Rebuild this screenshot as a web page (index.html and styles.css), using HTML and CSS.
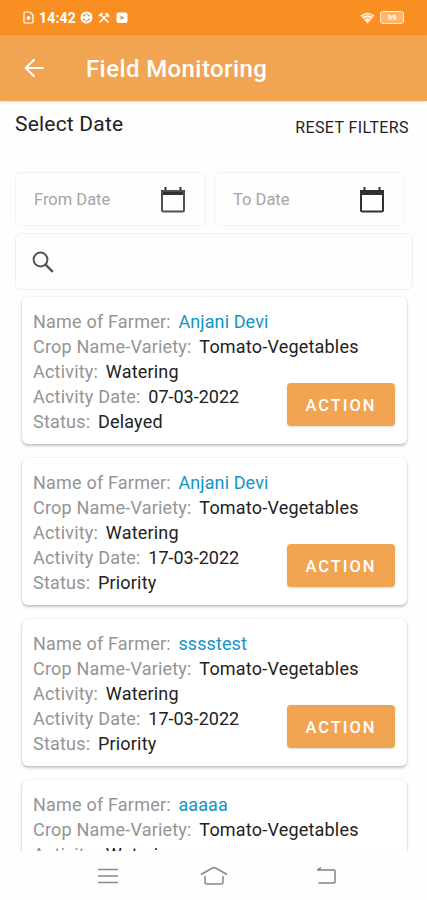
FILE: index.html
```
<!DOCTYPE html>
<html lang="en">
<head>
    <meta charset="UTF-8" />
    <meta name="viewport" content="width=device-width, initial-scale=1.0">
    <title>Field Monitoring</title>
    <link rel="stylesheet" href="styles.css">
</head>
<body>
<div class="status-bar">
    <svg class="sim" width="11" height="13" viewBox="0 0 11 13" fill="none" stroke="#fff" stroke-width="1.200">
        <path d="M2 1h5l3 3v7q0 1-1 1H2q-1 0-1-1V2q0-1 1-1z"/>
        <path d="M5.500 5v4M3.500 7h4" stroke-width="1.700"/>
    </svg>
    <span class="time">14:42</span>
    <svg class="globe" width="13" height="13" viewBox="0 0 13 13">
        <circle cx="6.500" cy="6.500" r="6" fill="#fff"/>
        <path d="M3 4.500h2.500M7.500 4.500H10M3 8.500h2.500M7.500 8.500H10M6.500 2v1.500M6.500 9.500v1.500" stroke="#f98f22" stroke-width="1.600"/>
    </svg>
    <svg class="tools" width="12" height="12" viewBox="0 0 12 12" fill="none" stroke="#fff" stroke-width="1.500">
        <path d="M3 3l7.500 7.500M1.500 10.500L9 3"/>
        <path d="M1 4l3.500-3M7.500 1.500Q10.500 2 10.500 5" stroke-width="1.900"/>
    </svg>
    <svg class="video" width="12" height="12" viewBox="0 0 12 12">
        <rect x="0.500" y="0.500" width="11" height="10.500" rx="2" fill="#fff"/>
        <path d="M4.500 3.500v4.500l4-2.250z" fill="#f98f22"/>
    </svg>
    <svg class="wifi" width="15" height="12" viewBox="0 0 15 12">
        <path d="M0.500 3.500Q7.500-2 14.500 3.500L7.500 11.500z" fill="#fff" opacity="0.900"/>
        <path d="M2 4.500Q7.500 1 13 4.500M4 7Q7.500 4.500 11 7" fill="none" stroke="#f98f22" stroke-width="0.800"/>
    </svg>
    <span class="battery">99</span>
</div>
<header>
    <svg width="20" height="20" viewBox="0 0 20 20" fill="none" stroke="#fff" stroke-width="2">
        <path d="M19.500 10H2M10.500 1.200L1.700 10l8.800 8.800"/>
    </svg>
    <h1>Field Monitoring</h1>
</header>

<main>
    <div class="filter-head">
        <span class="select-date">Select Date</span>
        <span class="reset">RESET FILTERS</span>
    </div>
    <div class="dates">
        <div class="date-field from">
            <span>From Date</span>
            <svg width="26" height="28" viewBox="0 0 26 28">
                <path d="M1 4h24v5H1zM4.500 1h2v4h-2zM19.500 1h2v4h-2z" fill="#303137"/>
                <rect x="2" y="5" width="22" height="20.500" rx="1.500" fill="none" stroke="#505156" stroke-width="2"/>
            </svg>
        </div>
        <div class="date-field to">
            <span>To Date</span>
            <svg width="26" height="28" viewBox="0 0 26 28">
                <path d="M1 4h24v5H1zM4.500 1h2v4h-2zM19.500 1h2v4h-2z" fill="#303137"/>
                <rect x="2" y="5" width="22" height="20.500" rx="1.500" fill="none" stroke="#303137" stroke-width="2"/>
            </svg>
        </div>
    </div>
    <div class="search">
        <svg width="22" height="22" viewBox="0 0 22 22" fill="none" stroke="#555" stroke-width="2">
            <circle cx="8.500" cy="8.500" r="6.900"/>
            <path d="M13.300 13.300L20.800 20.800" stroke-width="2.400"/>
        </svg>
    </div>

    <div class="list">
        <div class="card">
            <p>Name of Farmer: <a class="value">Anjani Devi</a></p>
            <p>Crop Name-Variety: <span class="value">Tomato-Vegetables</span></p>
            <p>Activity: <span class="value">Watering</span></p>
            <p>Activity Date: <span class="value date">07-03-2022</span></p>
            <p>Status: <span class="value">Delayed</span></p>
            <button>ACTION</button>
        </div>
        <div class="card">
            <p>Name of Farmer: <a class="value">Anjani Devi</a></p>
            <p>Crop Name-Variety: <span class="value">Tomato-Vegetables</span></p>
            <p>Activity: <span class="value">Watering</span></p>
            <p>Activity Date: <span class="value date">17-03-2022</span></p>
            <p>Status: <span class="value">Priority</span></p>
            <button>ACTION</button>
        </div>
        <div class="card">
            <p>Name of Farmer: <a class="value">sssstest</a></p>
            <p>Crop Name-Variety: <span class="value">Tomato-Vegetables</span></p>
            <p>Activity: <span class="value">Watering</span></p>
            <p>Activity Date: <span class="value date">17-03-2022</span></p>
            <p>Status: <span class="value">Priority</span></p>
            <button>ACTION</button>
        </div>
        <div class="card">
            <p>Name of Farmer: <a class="value">aaaaa</a></p>
            <p>Crop Name-Variety: <span class="value">Tomato-Vegetables</span></p>
            <p>Activity: <span class="value">Watering</span></p>
        </div>
    </div>
</main>

<nav>
    <svg width="20" height="16" viewBox="0 0 20 16" fill="none" stroke="#888" stroke-width="1.500">
        <path d="M0 1.500h20M0 8h20M0 14.500h20"/>
    </svg>
    <svg class="home" width="28" height="20" viewBox="0 0 28 20" fill="none" stroke="#888" stroke-width="1.500">
        <path d="M1 8.500L12.500 2Q14 1.200 15.500 2L27 8.500M5 10v6Q5 18 7 18h14q2 0 2-2v-6"/>
    </svg>
    <svg width="20" height="18" viewBox="0 0 20 18" fill="none" stroke="#808080" stroke-width="1.500">
        <path d="M1 3h17q1 0 1 1v11q0 1-1 1H2.500M5 0.500L1.500 3"/>
    </svg>
</nav>
</body>
</html>
```
FILE: styles.css
```
* {
    box-sizing: border-box;
}

body {
    margin: 0;
    height: 900px;
    display: flex;
    flex-direction: column;
    overflow: hidden;
    font-family: Roboto, "Liberation Sans", sans-serif;
    background-color: #fefefe;
    color: #222;
}

.status-bar {
    flex: none;
    display: flex;
    align-items: center;
    height: 35px;
    padding: 0 23px;
    background-color: #f98f22;
    color: white;
}

.time {
    margin: 0 4px 0 5px;
    width: 37px;
    font-size: 14px;
    font-weight: bold;
    letter-spacing: 0.2px;
}

.tools {
    margin: 0 6px 0 5px;
}

.wifi {
    margin-left: auto;
    margin-right: 5px;
}

.battery {
    width: 24px;
    height: 13px;
    border: 1.5px solid #ffe8cc;
    border-radius: 3px;
    background-color: #fbb56c;
    font-size: 8px;
    font-weight: bold;
    line-height: 11px;
    text-align: center;
}

header {
    flex: none;
    display: flex;
    align-items: center;
    height: 66px;
    padding: 0 24px;
    background-color: #f1a553;
    color: white;
    box-shadow: 0 1px 2px rgba(0,0,0,0.12);
}

h1 {
    margin: 2px 0 0 42px;
    font-size: 24px;
    font-weight: 500;
    letter-spacing: 0.4px;
}

main {
    flex: 1;
    min-height: 0;
    overflow: hidden;
}

.filter-head {
    display: flex;
    justify-content: space-between;
    height: 71px;
    padding: 10px 18px 0 15px;
}

.select-date {
    font-size: 21px;
    line-height: 27px;
    letter-spacing: 0.2px;
}

.reset {
    font-size: 16px;
    line-height: 34px;
    letter-spacing: 0.4px;
}

.dates {
    display: flex;
    gap: 8px;
    padding: 0 22px 0 15px;
}

.date-field {
    display: flex;
    align-items: center;
    justify-content: space-between;
    width: 191px;
    height: 54px;
    padding: 0 19px 0 18px;
    border: 1.5px solid #f3f3f3;
    border-radius: 6px;
    color: #a6a6a6;
    font-size: 16.5px;
}

.date-field svg {
    margin-top: 2px;
}

.search {
    display: flex;
    align-items: center;
    height: 57px;
    margin: 7px 14px 0 15px;
    padding: 0 16px;
    border: 1.5px solid #f0f0f0;
    border-radius: 6px;
}

.list {
    display: flex;
    flex-direction: column;
    gap: 14px;
    padding: 7px 20px 0 22px;
}

.card {
    position: relative;
    flex: none;
    height: 147px;
    padding: 12px 11px 0;
    border-radius: 6px;
    background-color: white;
    box-shadow: 0 2px 3px rgba(0,0,0,0.22), 0 0 2px rgba(0,0,0,0.12);
}

.card p {
    margin: 0;
    color: #949494;
    font-size: 18px;
    line-height: 25px;
    letter-spacing: 0.2px;
    white-space: nowrap;
}

.value {
    margin-left: 3px;
    color: #222;
}

.date {
    letter-spacing: 0;
}

a.value {
    color: #1593c8;
    letter-spacing: 0.1px;
}

.card button {
    position: absolute;
    right: 12px;
    bottom: 18px;
    width: 108px;
    height: 43px;
    padding: 2px 0 0;
    border: none;
    border-radius: 4px;
    background-color: #f1a553;
    box-shadow: 0 1px 2px rgba(0,0,0,0.15);
    color: white;
    font-family: inherit;
    font-size: 16.5px;
    font-weight: 500;
    letter-spacing: 2px;
}

nav {
    flex: none;
    display: flex;
    align-items: center;
    justify-content: space-between;
    height: 49px;
    padding: 1px 91px 0 98px;
    background-color: #fefefe;
}

.home {
    margin-right: 6px;
}
```
